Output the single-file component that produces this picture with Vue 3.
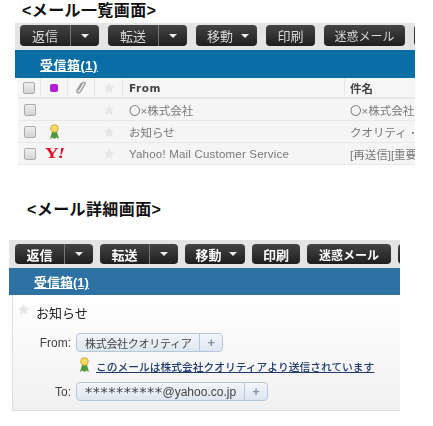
<template>
  <div class="page">
    <h2 class="title first">&lt;メール一覧画面&gt;</h2>
    <section class="shot list-shot">
      <div class="toolbar">
        <div v-for="btn in buttons" :key="btn.label" class="btn" :style="{ width: btn.w[0] + 'px' }">
          <span class="btn-label" :class="{ tight: btn.tight }">{{ btn.label }}</span>
          <span v-if="btn.split" class="btn-split"><i class="caret"></i></span>
          <i v-else-if="btn.caret" class="caret inline"></i>
        </div>
        <div class="btn sliver"></div>
      </div>
      <div class="bluebar"><a class="folder">受信箱(1)</a></div>
      <div class="mail-table">
        <div class="mail-row head">
          <span class="cell c-check"><i class="check"></i></span>
          <span class="cell c-mark"><i class="purple"></i></span>
          <span class="cell c-clip">
            <svg width="12" height="15" viewBox="0 0 12 15"><path d="M3 10.5 L7.6 3.2 C8.6 1.6 10.8 2.4 10 4.2 L5.2 11.8 C4 13.8 1 12.8 2 10.4 L6.4 3.2" fill="none" stroke="#9a9a9a" stroke-width="1.3"/></svg>
          </span>
          <span class="cell c-star"><svg class="star" viewBox="0 0 20 20"><path d="M10 1l2.7 6 6.3.6-4.8 4.2 1.5 6.4L10 14.8l-5.7 3.4 1.5-6.4L1 7.6 7.3 7z"/></svg></span>
          <span class="cell c-from">From</span>
          <span class="cell c-subject">件名</span>
        </div>
        <div v-for="mail in mails" :key="mail.from" class="mail-row">
          <span class="cell c-check"><i class="check"></i></span>
          <span class="cell c-mark">
            <svg v-if="mail.icon === 'ribbon'" width="11" height="16" viewBox="0 0 11 16"><path d="M3 8 L1 15 L3.6 13.6 L5.5 15 L7.4 13.6 L10 15 L8 8z" fill="#4f9a3a"/><circle cx="5.5" cy="4.5" r="3.8" fill="#f6dc6a" stroke="#dba52c"/></svg>
            <span v-if="mail.icon === 'yahoo'" class="yahoo"><b>Y</b><b class="bang">!</b></span>
          </span>
          <span class="cell c-clip"></span>
          <span class="cell c-star"><svg class="star" viewBox="0 0 20 20"><path d="M10 1l2.7 6 6.3.6-4.8 4.2 1.5 6.4L10 14.8l-5.7 3.4 1.5-6.4L1 7.6 7.3 7z"/></svg></span>
          <span class="cell c-from" :class="{ latin: mail.latin }">{{ mail.from }}</span>
          <span class="cell c-subject">{{ mail.subject }}</span>
        </div>
      </div>
    </section>

    <h2 class="title second">&lt;メール詳細画面&gt;</h2>
    <section class="shot detail-shot">
      <div class="toolbar">
        <div v-for="btn in buttons" :key="btn.label" class="btn" :style="{ width: btn.w[1] + 'px' }">
          <span class="btn-label" :class="{ tight: btn.tight }">{{ btn.label }}</span>
          <span v-if="btn.split" class="btn-split"><i class="caret"></i></span>
          <i v-else-if="btn.caret" class="caret inline"></i>
        </div>
        <div class="btn sliver"></div>
      </div>
      <div class="bluebar"><a class="folder">受信箱(1)</a></div>
      <div class="panel">
        <div class="subject-line">
          <svg class="star big" viewBox="0 0 20 20"><path d="M10 1l2.7 6 6.3.6-4.8 4.2 1.5 6.4L10 14.8l-5.7 3.4 1.5-6.4L1 7.6 7.3 7z"/></svg>
          <span>お知らせ</span>
        </div>
        <div class="addr from-row">
          <span class="addr-label">From:</span>
          <span class="chip"><span class="chip-text jp">株式会社クオリティア</span><span class="chip-plus">+</span></span>
        </div>
        <div class="addr notice">
          <span class="addr-label ribbon">
            <svg width="11" height="16" viewBox="0 0 11 16"><path d="M3 8 L1 15 L3.6 13.6 L5.5 15 L7.4 13.6 L10 15 L8 8z" fill="#4f9a3a"/><circle cx="5.5" cy="4.5" r="3.8" fill="#f6dc6a" stroke="#dba52c"/></svg>
          </span>
          <a class="notice-link">このメールは株式会社クオリティアより送信されています</a>
        </div>
        <div class="addr to-row">
          <span class="addr-label">To:</span>
          <span class="chip"><span class="chip-text"><span class="stars">**********</span>@yahoo.co.jp</span><span class="chip-plus">+</span></span>
        </div>
      </div>
    </section>
  </div>
</template>

<script setup>
const buttons = [
  { label: '返信', split: true, w: [79, 78] },
  { label: '転送', split: true, w: [79, 78] },
  { label: '移動', caret: true, w: [61, 60] },
  { label: '印刷', w: [49, 48] },
  { label: '迷惑メール', tight: true, w: [81, 84] }
]

const mails = [
  { from: '〇×株式会社', subject: '〇×株式会社' },
  { from: 'お知らせ', subject: 'クオリティ ･', icon: 'ribbon' },
  { from: 'Yahoo! Mail Customer Service', subject: '[再送信][重要', icon: 'yahoo', latin: true }
]
</script>

<style scoped>
.page {
  width: 433px;
  height: 426px;
  overflow: hidden;
  background: #fff;
  font-family: "Liberation Sans", "Noto Sans CJK JP", sans-serif;
  color: #333;
}

.title {
  margin: 0;
  font-size: 16px;
  line-height: 20px;
  font-weight: 700;
  color: #111;
  letter-spacing: 0.4px;
}

.title.first {
  padding: 1px 0 2px 22px;
}

.title.second {
  padding: 35px 0 20px 27px;
}

.shot {
  filter: blur(0.35px);
}

.list-shot {
  margin-left: 15px;
  width: 400px;
}

.detail-shot {
  margin-left: 9px;
  width: 391px;
}

.toolbar {
  display: flex;
  align-items: flex-start;
  gap: 9px;
  height: 27px;
  padding: 2px 0 0 5px;
  box-sizing: border-box;
  background: #e4e4e4;
  overflow: hidden;
}

.detail-shot .toolbar {
  height: 28px;
  padding: 4px 0 0 6px;
  gap: 7px;
}

.btn {
  flex: none;
  display: flex;
  align-items: center;
  height: 21px;
  border-radius: 4px;
  background: linear-gradient(#444, #1e1e1e);
  color: #d8d8d8;
  font-size: 13px;
}

.detail-shot .btn {
  height: 20px;
  color: #fff;
  font-weight: 700;
}

.btn-label {
  flex: 1;
  text-align: center;
  white-space: nowrap;
}

.btn-label.tight {
  font-size: 12px;
}

.btn-split {
  flex: none;
  width: 29px;
  height: 100%;
  display: flex;
  align-items: center;
  justify-content: center;
  border-left: 1px solid #777;
  box-sizing: border-box;
}

.caret {
  width: 0;
  height: 0;
  border-left: 4px solid transparent;
  border-right: 4px solid transparent;
  border-top: 4px solid #eee;
}

.caret.inline {
  margin-right: 8px;
  margin-left: -3px;
}

.sliver {
  width: 40px;
}

.bluebar {
  height: 28px;
  padding-left: 25px;
  display: flex;
  align-items: center;
  background: #0a6ea6;
}

.detail-shot .bluebar {
  height: 27px;
  background: #2e72a3;
}

.folder {
  color: #fff;
  font-size: 13px;
  font-weight: 700;
  text-decoration: underline;
}

.list-shot .folder {
  letter-spacing: 0.5px;
}

.mail-table {
  margin-left: 3px;
  overflow: hidden;
}

.mail-row {
  display: grid;
  grid-template-columns: 23px 27px 27px 28px 222px 1fr;
  height: 22px;
  align-items: center;
  background: #f5f5f5;
  border-bottom: 1px solid #e8e8e8;
  box-sizing: border-box;
  font-size: 11.5px;
  color: #777;
}

.mail-row.head {
  height: 21px;
  background: #f6f6f6;
  border-bottom: 2px solid #e6e6e6;
  color: #444;
  font-weight: 700;
}

.cell {
  height: 100%;
  display: flex;
  align-items: center;
  justify-content: center;
  box-sizing: border-box;
  white-space: nowrap;
  overflow: hidden;
}

.head .cell {
  border-right: 1px solid #e6e6e6;
}

.head .cell:last-child {
  border-right: 0;
}

.c-from,
.c-subject {
  justify-content: flex-start;
  padding-left: 5px;
}

.c-from {
  padding-left: 6px;
}

.head .c-from {
  font-family: "DejaVu Sans", sans-serif;
  font-size: 10.5px;
  letter-spacing: 0.5px;
}

.c-from.latin {
  font-size: 11.5px;
  letter-spacing: 0.2px;
}

.check {
  width: 10px;
  height: 10px;
  border: 1px solid #aaa;
  border-radius: 2px;
  background: linear-gradient(#eee, #d4d4d4);
}

.purple {
  width: 8px;
  height: 8px;
  border-radius: 2px;
  background: #b020dc;
}

.yahoo {
  font-family: "Liberation Serif", serif;
  font-size: 15px;
  color: #e0102a;
  display: flex;
  align-items: baseline;
  transform: scaleX(1.3);
}

.yahoo .bang {
  font-style: italic;
  margin-left: -1px;
}

.star {
  width: 12px;
  height: 12px;
  fill: #e6e6e6;
}

.star.big {
  width: 13px;
  height: 13px;
  margin-top: -5px;
}

.panel {
  margin-left: 3px;
  height: 116px;
  padding: 7px 0 0 4px;
  box-sizing: border-box;
  border-left: 1px solid #ddd;
  border-bottom: 1px solid #ddd;
  background: linear-gradient(#fff, #f1f1f1);
}

.subject-line {
  display: flex;
  align-items: center;
  gap: 6px;
  height: 20px;
  font-size: 13px;
  color: #222;
}

.addr {
  display: flex;
  align-items: center;
  height: 19px;
  margin-top: 5px;
  font-size: 12px;
  color: #444;
}

.addr.from-row {
  margin-top: 11px;
}

.addr.to-row {
  margin-top: 6px;
}

.addr-label {
  width: 54px;
  flex: none;
  text-align: right;
  margin-right: 5px;
}

.addr-label.ribbon {
  width: 73px;
  margin-right: 6px;
}

.chip {
  display: flex;
  align-items: stretch;
  height: 19px;
  box-sizing: border-box;
  border: 1px solid #b5c6d8;
  border-radius: 4px;
  background: linear-gradient(#f3f6fa, #dde6f0);
}

.chip-text {
  display: flex;
  align-items: center;
  padding: 0 8px;
  font-size: 12px;
  color: #444;
  white-space: nowrap;
}

.chip-text.jp {
  font-size: 11px;
  letter-spacing: -0.3px;
}

.stars {
  font-family: "DejaVu Sans", sans-serif;
  font-size: 14.5px;
  letter-spacing: 0.5px;
}

.chip-plus {
  width: 22px;
  display: flex;
  align-items: center;
  justify-content: center;
  border-left: 1px solid #b5c6d8;
  color: #7d93a8;
  font-size: 13px;
  font-weight: 700;
}

.notice-link {
  color: #1e3a6e;
  font-size: 10.75px;
  font-weight: 500;
  text-decoration: underline;
  white-space: nowrap;
}
</style>
